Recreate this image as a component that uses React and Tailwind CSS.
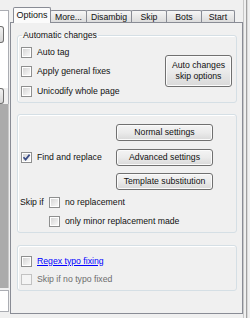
import React from 'react';

const tabs = [
  { label: 'Options', w: 'w-[38px]' },
  { label: 'More...', w: 'w-[37px]' },
  { label: 'Disambig', w: 'w-[46px]' },
  { label: 'Skip', w: 'w-[36px]' },
  { label: 'Bots', w: 'w-[36px]' },
  { label: 'Start', w: 'w-[34px]' },
];

// Win7 style checkbox square
const Box = ({ checked, disabled }) => (
  <span
    className={`flex h-[11px] w-[11px] shrink-0 border p-px ${
      disabled ? 'border-[#c2c2c2] bg-[#f4f4f4]' : 'border-[#8e8f8f] bg-white'
    }`}
  >
    <span
      className={`flex flex-1 items-center justify-center ${
        disabled ? 'bg-[#f4f4f4]' : 'bg-linear-to-br from-[#d6d6d6] to-[#f8f8f8]'
      }`}
    >
      {checked && (
        <svg width="9" height="9" viewBox="0 0 9 9" className="-m-px">
          <path d="M1.5 4.3 L3.6 6.6 L7.6 1.6" fill="none" stroke="#3b4d86" strokeWidth="1.7" />
        </svg>
      )}
    </span>
  </span>
);

const Check = ({ label, checked, disabled, link }) => (
  <label className="flex h-[12px] items-center gap-[5px]">
    <Box checked={checked} disabled={disabled} />
    <span
      className={
        link ? 'text-[#0000ff] underline' : disabled ? 'text-[#6d6d6d]' : 'text-[#111]'
      }
    >
      {label}
    </span>
  </label>
);

const Btn = ({ children, className = '' }) => (
  <button
    className={`flex items-center justify-center rounded-[3px] border border-[#707070] bg-linear-to-b from-[#f4f4f4] via-[#ebebeb] to-[#d9d9d9] text-[#111] shadow-[inset_0_0_0_1px_#fbfbfb] ${className}`}
  >
    {children}
  </button>
);

const LeftStrip = () => (
  <div className="flex w-[10px] flex-col">
    <div className="h-[10px]" />
    <div className="h-[16px] w-[9px] border-t border-r border-[#abadb3] bg-white" />
    <div className="flex h-[17px] w-[9px] border-r border-[#abadb3] bg-white">
      <div className="w-[4px] rounded-r-[3px] border border-l-0 border-[#707070] bg-linear-to-b from-[#f2f2f2] to-[#d6d6d6]" />
    </div>
    <div className="h-[45px] w-[9px] border-r border-[#abadb3] bg-white" />
    <div className="flex h-[16px] w-[9px] border-r border-[#abadb3]">
      <div className="w-[4px] rounded-r-[3px] border border-l-0 border-[#707070] bg-linear-to-b from-[#f2f2f2] to-[#d6d6d6]" />
    </div>
    <div className="flex-1 w-[9px] border-r border-[#c8c8c8] bg-[#ababab]" />
    <div className="mt-[2px] h-[22px] w-[9px] border border-l-0 border-[#abadb3] bg-white" />
    <div className="h-[6px]" />
  </div>
);

export default function App() {
  return (
    <div className="flex h-[318px] w-[250px] overflow-hidden bg-[#f0f0f0] font-['Liberation_Sans',Arial,sans-serif] text-[8.7px] leading-[11px] text-[#111]">
      <LeftStrip />

      {/* Tab control */}
      <div className="flex w-[233px] flex-col pt-[7px]">
        <div className="flex h-[15px] items-end pl-[3px]">
          {tabs.map((t, i) =>
            i === 0 ? (
              <div
                key={t.label}
                className={`relative z-10 -mb-px flex h-[16px] items-center justify-center rounded-t-[2px] border border-b-0 border-[#898c95] bg-[#fbfbfb] pb-[1px] text-[9px] ${t.w}`}
              >
                {t.label}
              </div>
            ) : (
              <div
                key={t.label}
                className={`-ml-px flex h-[12px] items-center justify-center rounded-t-[2px] border border-b-0 border-[#898c95] bg-linear-to-b from-[#f6f6f6] to-[#dcdcdc] pt-[1px] ${t.w}`}
              >
                {t.label}
              </div>
            )
          )}
        </div>

        <div className="flex h-[292px] flex-col border border-[#898c95] bg-[#f0f0f0] pt-[7px] pr-[5px] pl-[6px]">
          {/* Automatic changes */}
          <fieldset className="rounded-[3px] border border-[#d5dfe5] px-0 pb-[5px] shadow-[inset_1px_1px_0_#fff]">
            <legend className="ml-[4px] px-px leading-[11px]">Automatic changes</legend>
            <div className="flex items-start pt-[5px] pr-[4px] pl-[3px]">
              <div className="flex flex-col gap-[7.5px]">
                <Check label="Auto tag" />
                <Check label="Apply general fixes" />
                <Check label="Unicodify whole page" />
              </div>
              <Btn className="mt-[8.5px] ml-auto h-[32px] w-[67px] flex-col">
                <span>Auto changes</span>
                <span>skip options</span>
              </Btn>
            </div>
          </fieldset>

          {/* Find and replace */}
          <div className="mt-[11px] rounded-[3px] border border-[#d5dfe5] pt-[9px] pb-[5px] shadow-[inset_1px_1px_0_#fff]">
            <div className="flex items-center">
              <div className="w-[98px] pl-[3px]">
                <Check label="Find and replace" checked />
              </div>
              <div className="flex w-[97px] flex-col gap-[7.5px]">
                <Btn className="h-[17px]">Normal settings</Btn>
                <Btn className="h-[17px]">Advanced settings</Btn>
                <Btn className="h-[17px]">Template substitution</Btn>
              </div>
            </div>
            <div className="mt-[6px] flex flex-col gap-[7px]">
              <div className="flex h-[12px] items-center pl-[2px]">
                <span className="w-[29px]">Skip if</span>
                <Check label="no replacement" />
              </div>
              <div className="pl-[31px]">
                <Check label="only minor replacement made" />
              </div>
            </div>
          </div>

          {/* Typo fixing */}
          <div className="mt-[12px] flex flex-col gap-[6px] rounded-[3px] border border-[#d5dfe5] pt-[9px] pb-[5px] pl-[3px] shadow-[inset_1px_1px_0_#fff]">
            <Check label="Regex typo fixing" link />
            <Check label="Skip if no typo fixed" disabled />
          </div>
        </div>
      </div>

      {/* Right edge of neighbouring panel */}
      <div className="flex w-[7px]">
        <div className="w-px bg-[#c8c8c8]" />
        <div className="ml-[2px] w-px bg-[#a0a0a0]" />
        <div className="w-px bg-[#dadada]" />
      </div>
    </div>
  );
}
